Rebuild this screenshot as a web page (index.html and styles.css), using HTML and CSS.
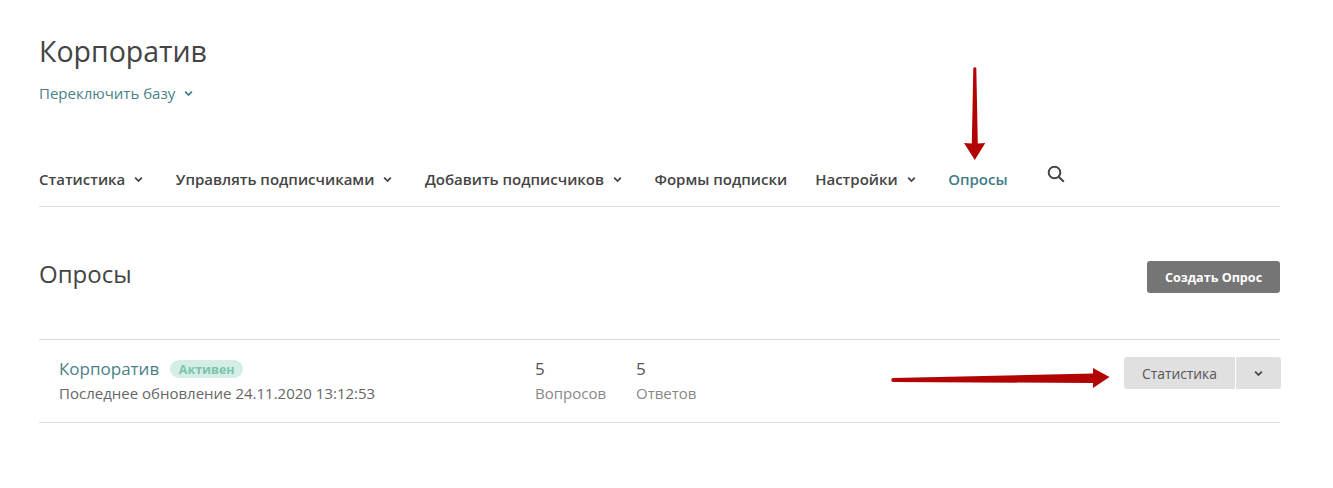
FILE: index.html
```html
<!DOCTYPE html>
<html lang="ru">
<head>
<meta charset="utf-8">
<title>Опросы</title>
<link rel="stylesheet" href="styles.css">
</head>
<body>
<div class="page">
  <header class="head">
    <h1 class="title">Корпоратив</h1>
    <a class="switch">Переключить базу
      <svg class="chev chev-switch" viewBox="0 0 10 7"><path d="M1.300 1.500 5 5.200l3.700-3.700"/></svg>
    </a>
  </header>
  <nav class="nav">
    <a class="nav-item">Статистика<svg class="chev" viewBox="0 0 10 7"><path d="M1.300 1.500 5 5.200l3.700-3.700"/></svg></a>
    <a class="nav-item">Управлять подписчиками<svg class="chev" viewBox="0 0 10 7"><path d="M1.300 1.500 5 5.200l3.700-3.700"/></svg></a>
    <a class="nav-item">Добавить подписчиков<svg class="chev" viewBox="0 0 10 7"><path d="M1.300 1.500 5 5.200l3.700-3.700"/></svg></a>
    <a class="nav-item">Формы подписки</a>
    <a class="nav-item">Настройки<svg class="chev" viewBox="0 0 10 7"><path d="M1.300 1.500 5 5.200l3.700-3.700"/></svg></a>
    <a class="nav-item nav-active">Опросы</a>
    <svg class="search" viewBox="0 0 18 18"><circle cx="7.500" cy="7.500" r="5.800"/><path d="m11.800 11.800 5 5"/></svg>
  </nav>
  <section class="section-head">
    <h2 class="section-title">Опросы</h2>
    <button class="btn-dark">Создать Опрос</button>
  </section>
  <div class="row">
    <div class="info">
      <div class="name-line"><a class="name">Корпоратив</a><span class="badge">Активен</span></div>
      <div class="updated">Последнее обновление 24.11.2020 13:12:53</div>
    </div>
    <div class="stat stat-q"><div class="num">5</div><div class="label">Вопросов</div></div>
    <div class="stat"><div class="num">5</div><div class="label">Ответов</div></div>
    <div class="actions">
      <button class="btn-grey">Статистика</button>
      <button class="btn-grey btn-more"><svg class="chev chev-btn" viewBox="0 0 10 7"><path d="M1.300 1.500 5 5.200l3.700-3.700"/></svg></button>
    </div>
  </div>
</div>
<svg class="arrow arrow-down" viewBox="0 0 24 96"><path d="M10.300 2q1.500-1.500 3 0L14.800 77.500 22.300 77 11.800 94 1 77 8.800 77.500z"/></svg>
<svg class="arrow arrow-right" viewBox="0 0 224 24"><path d="M2.500 12 L203 7.500 L203 2 L219.500 11 L203 22 L203 17 L2.500 16 Q0 14 2.500 12z"/></svg>
</body>
</html>
```
FILE: styles.css
```css
* { box-sizing: border-box; }
html, body { margin: 0; padding: 0; background: #fff; }
body { font-family: "Open Sans", "Liberation Sans", sans-serif; color: #444; height: 488px; overflow: hidden; position: relative; }
.page { width: 1242px; margin-left: 39px; }
.head { padding-top: 33px; }
.title { margin: 0; font-size: 28.5px; font-weight: 400; line-height: 36px; color: #444; }
.switch { display: flex; align-items: center; margin-top: 14px; font-size: 15px; line-height: 20px; color: #4a7f88; }
.chev { width: 9px; height: 7px; margin: 0 4.5px 0 9px; fill: none; stroke: #444; stroke-width: 2; }
.chev-switch { stroke: #3e7d87; margin: 0 0 0 9px; }
.nav { display: flex; align-items: center; margin-top: 54px; height: 50px; border-bottom: 1px solid #ddd; width: 1241px; padding-bottom: 5px; }
.nav-item { display: flex; align-items: center; font-size: 15px; font-weight: 600; line-height: 20px; color: #444; margin-right: 28px; }
.nav-active { color: #437c86; }
.search { width: 18px; height: 18px; margin: -10px 0 0 11px; fill: none; stroke: #444; stroke-width: 2; }
.section-head { display: flex; justify-content: space-between; align-items: flex-start; width: 1241px; margin-top: 54px; }
.section-title { margin: 0; font-size: 24px; font-weight: 400; line-height: 26px; color: #444; }
.btn-dark { width: 133px; height: 32px; border: 0; border-radius: 3px; background: #757575; color: #fff; font: 700 12.6px "Open Sans", sans-serif; padding: 0; }
.row { display: flex; align-items: center; height: 84px; margin-top: 46px; padding: 0 0 2px 20px; border-top: 1px solid #ddd; border-bottom: 1px solid #ddd; width: 1241px; position: relative; }
.info { width: 476px; }
.name-line { display: flex; align-items: center; height: 22px; }
.name { font-size: 17px; line-height: 22px; color: #4a7f88; }
.badge { margin-left: 11px; height: 18px; width: 73px; text-align: center; border-radius: 9px; background: #d4eee6; color: #7cc4ab; font-size: 12.5px; font-weight: 700; line-height: 19px; }
.updated { margin-top: 3px; font-size: 15px; line-height: 20px; color: #666; }
.stat { width: 101px; }
.num { font-size: 17px; line-height: 22px; color: #555; }
.label { margin-top: 3px; font-size: 15px; line-height: 20px; color: #888; }
.actions { display: flex; position: absolute; right: -1px; top: 17px; gap: 1px; }
.btn-grey { height: 32px; width: 111px; border: 0; border-radius: 3px 0 0 3px; background: #e0e0e0; color: #555; font: 400 13.8px "Open Sans", sans-serif; padding: 0; }
.btn-more { width: 45px; border-radius: 0 3px 3px 0; display: flex; align-items: center; justify-content: center; }
.chev-btn { margin: 0; }
.arrow { position: absolute; fill: #b30404; }
.arrow-down { left: 963px; top: 66px; width: 24px; height: 96px; }
.arrow-right { left: 890px; top: 366px; width: 224px; height: 24px; }
```
